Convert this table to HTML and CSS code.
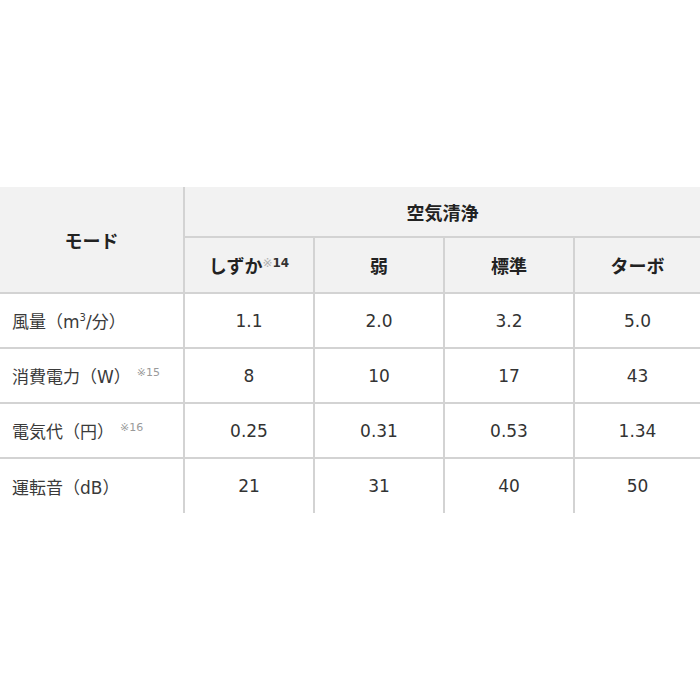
FILE: index.html
```html
<!DOCTYPE html>
<html lang="ja">
<head>
<meta charset="utf-8">
<link rel="stylesheet" href="styles.css">
</head>
<body>
<div class="page">
  <table class="spec">
    <colgroup>
      <col class="c-label">
      <col class="c-val">
      <col class="c-val">
      <col class="c-val">
      <col class="c-last">
    </colgroup>
    <thead>
      <tr class="h1">
        <th rowspan="2" class="mode">モード</th>
        <th colspan="4" class="group">空気清浄</th>
      </tr>
      <tr class="h2">
        <th>しずか<sup class="note"><span class="kome">※</span>14</sup></th>
        <th>弱</th>
        <th>標準</th>
        <th>ターボ</th>
      </tr>
    </thead>
    <tbody>
      <tr>
        <td class="label">風量（m<sup class="pow">3</sup>/分）</td>
        <td>1.1</td><td>2.0</td><td>3.2</td><td>5.0</td>
      </tr>
      <tr>
        <td class="label">消費電力（W）<sup class="ref">※15</sup></td>
        <td>8</td><td>10</td><td>17</td><td>43</td>
      </tr>
      <tr>
        <td class="label">電気代（円）<sup class="ref">※16</sup></td>
        <td>0.25</td><td>0.31</td><td>0.53</td><td>1.34</td>
      </tr>
      <tr>
        <td class="label">運転音（dB）</td>
        <td>21</td><td>31</td><td>40</td><td>50</td>
      </tr>
    </tbody>
  </table>
</div>
</body>
</html>
```

FILE: styles.css
```css
html, body {
  margin: 0;
  padding: 0;
  background: #ffffff;
}

.page {
  padding-top: 187px;
  font-family: "DejaVu Sans", "Noto Sans CJK JP", sans-serif;
  color: #333333;
}

.spec {
  width: 700px;
  table-layout: fixed;
  border-collapse: collapse;
  font-size: 17px;
}

.c-label { width: 184px; }
.c-val { width: 130px; }
.c-last { width: 126px; }

.spec th,
.spec td {
  border: 2px solid #d3d3d3;
  text-align: center;
  vertical-align: middle;
  padding: 0;
}

.spec tr > :first-child { border-left: none; }
.spec tr > :last-child { border-right: none; }
.spec .mode { border-left: none; }
.spec thead tr.h1 th { border-top: none; }
.spec tbody tr:last-child td { border-bottom: none; }

.spec th {
  background: #f2f2f2;
  font-weight: bold;
  color: #222222;
  font-size: 18px;
}

.h1 { height: 50px; }
.h2 { height: 56px; }
.spec tbody tr { height: 55px; }

.group { padding-bottom: 8px; }
.mode { padding-bottom: 4px; }

.spec td.label {
  text-align: left;
  padding-left: 12px;
  font-size: 17px;
  color: #3a3a3a;
}

.note {
  font-size: 12px;
  font-weight: bold;
  color: #333333;
  vertical-align: 6px;
  line-height: 0;
}

.kome {
  color: #b0b0b0;
  font-weight: normal;
}

.pow {
  font-size: 10px;
  vertical-align: 7px;
  line-height: 0;
}

.ref {
  font-size: 11px;
  color: #9a9a9a;
  margin-left: 6px;
  vertical-align: 7px;
  line-height: 0;
}
```
